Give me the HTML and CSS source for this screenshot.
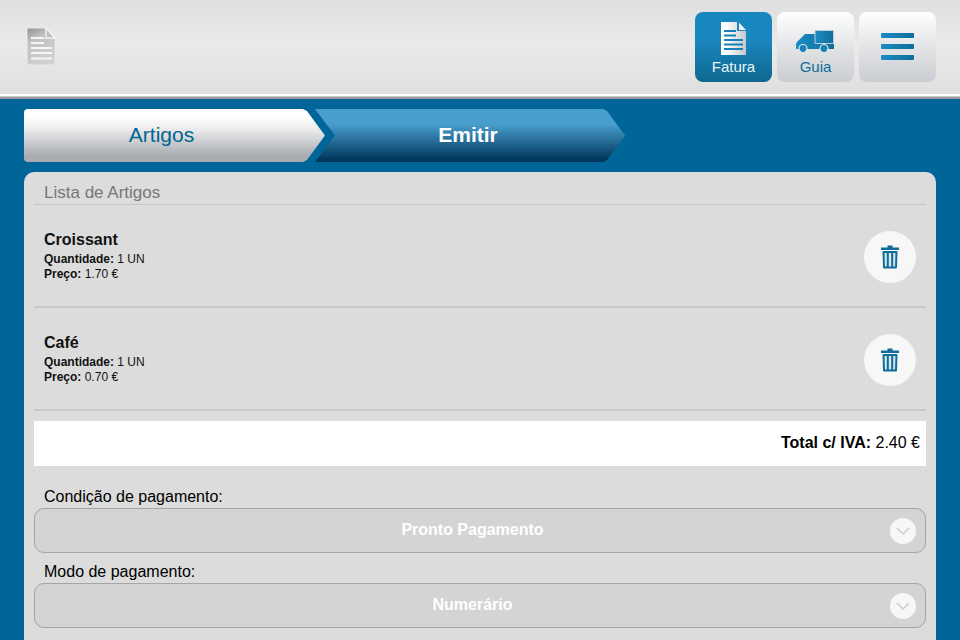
FILE: index.html
```
<!DOCTYPE html>
<html lang="pt">
<head>
	<meta charset="UTF-8">
	<meta name="viewport" content="width=device-width, initial-scale=1">
	<title>Emitir Fatura</title>
	<link rel="stylesheet" href="styles.css">
</head>
<body>
<header class="topbar">
	<svg class="doc-icon" width="36" height="44" viewBox="0 0 36 44" aria-hidden="true">
		<defs>
			<linearGradient id="docGrey" x1="0" y1="0" x2="0.4" y2="1">
				<stop offset="0" stop-color="#8c8f91"/>
				<stop offset="0.35" stop-color="#bfc1c2"/>
				<stop offset="1" stop-color="#cfd1d1"/>
			</linearGradient>
		</defs>
		<path d="M4 3h18l9 10v25q0 2-2 2H5q-2 0-2-2V4q0-1 1-1z" fill="url(#docGrey)" stroke="#e9e9e9" stroke-width="1"/>
		<path d="M22 3v10h9z" fill="#bcbec0" stroke="#f4f4f4" stroke-width="1.4"/>
		<path d="M7 13h13M7 18h13M7 23h21M7 28h21M7 33.500h21" stroke="#f6f6f6" stroke-width="2.200"/>
	</svg>
	<nav class="menu">
		<button type="button" class="menu-btn active">
			<svg width="26" height="34" viewBox="0 0 26 34" aria-hidden="true">
				<defs>
					<linearGradient id="docWhite">
						<stop offset="0.2" stop-color="#fff"/>
						<stop offset="1" stop-color="#c4c8cd"/>
					</linearGradient>
				</defs>
				<path d="M0 0h16v9h9v24H0z" fill="url(#docWhite)"/>
				<path d="M18 0.500v7.500h7z" fill="#f2f2f2"/>
				<path d="M3 9h12M3 13.500h12M3 18h19M3 22.500h19M3 27h19" stroke="#1781b8" stroke-width="2"/>
			</svg>
			<span>Fatura</span>
		</button>
		<button type="button" class="menu-btn">
			<svg width="39" height="34" viewBox="0 0 39 34" aria-hidden="true">
				<defs>
					<linearGradient id="blue">
						<stop offset="0" stop-color="#1a8cc6"/>
						<stop offset="1" stop-color="#0f6d97"/>
					</linearGradient>
				</defs>
				<path d="M0 27v-5l1-2 8-8h10v10h19v5z" fill="url(#blue)"/>
				<path d="M19 8.500h18.500v13H19z" fill="url(#blue)" stroke="#b9cfdb"/>
				<circle cx="7" cy="26.500" r="4" fill="#1781b8" stroke="#e3e6e8" stroke-width="1.200"/>
				<circle cx="28" cy="26.500" r="4" fill="#1781b8" stroke="#e3e6e8" stroke-width="1.200"/>
			</svg>
			<span>Guia</span>
		</button>
		<button type="button" class="menu-btn menu-toggle" aria-label="Menu">
			<svg width="33" height="28" viewBox="0 0 33 28" aria-hidden="true">
				<g fill="url(#blue)">
					<rect y="0" width="33" height="5" rx="1"/>
					<rect y="11" width="33" height="5" rx="1"/>
					<rect y="22" width="33" height="5" rx="1"/>
				</g>
			</svg>
		</button>
	</nav>
</header>
<main class="content">
	<nav class="steps">
		<button type="button" class="step step-first">Artigos</button>
		<button type="button" class="step step-next">Emitir</button>
	</nav>
	<section class="panel">
		<h1 class="panel-title">Lista de Artigos</h1>
		<ul class="items">
			<li class="item">
				<div class="info">
					<h2>Croissant</h2>
					<p><b>Quantidade:</b> 1 UN</p>
					<p><b>Preço:</b> 1.70 €</p>
				</div>
				<button type="button" class="delete" aria-label="Apagar Croissant">
					<svg width="18" height="24" viewBox="0 0 18 24" aria-hidden="true">
						<path d="M6.500 0.500h5v2H18v2.500H0V2.500h6.500z" fill="#0f6d97"/>
						<path d="M2.500 7h13l-0.500 15.500H3z" fill="#d5e6ee" stroke="#0f6d97" stroke-width="2" stroke-linejoin="round"/>
						<path d="M6.800 7v15M11.200 7v15" stroke="#0f6d97" stroke-width="2"/>
					</svg>
				</button>
			</li>
			<li class="item">
				<div class="info">
					<h2>Café</h2>
					<p><b>Quantidade:</b> 1 UN</p>
					<p><b>Preço:</b> 0.70 €</p>
				</div>
				<button type="button" class="delete" aria-label="Apagar Café">
					<svg width="18" height="24" viewBox="0 0 18 24" aria-hidden="true">
						<path d="M6.500 0.500h5v2H18v2.500H0V2.500h6.500z" fill="#0f6d97"/>
						<path d="M2.500 7h13l-0.500 15.500H3z" fill="#d5e6ee" stroke="#0f6d97" stroke-width="2" stroke-linejoin="round"/>
						<path d="M6.800 7v15M11.200 7v15" stroke="#0f6d97" stroke-width="2"/>
					</svg>
				</button>
			</li>
		</ul>
		<p class="total"><b>Total c/ IVA:</b> 2.40 €</p>
		<form class="payment">
			<label for="condicao">Condição de pagamento:</label>
			<div class="select">
				<select id="condicao">
					<option>Pronto Pagamento</option>
				</select>
				<svg class="arrow" width="26" height="26" viewBox="0 0 26 26" aria-hidden="true">
					<circle cx="13" cy="13" r="13" fill="#f7f7f7"/>
					<path d="M7 10l6 6 6-6" fill="none" stroke="#ccc" stroke-width="1.500"/>
				</svg>
			</div>
			<label for="modo">Modo de pagamento:</label>
			<div class="select">
				<select id="modo">
					<option>Numerário</option>
				</select>
				<svg class="arrow" width="26" height="26" viewBox="0 0 26 26" aria-hidden="true">
					<circle cx="13" cy="13" r="13" fill="#f7f7f7"/>
					<path d="M7 10l6 6 6-6" fill="none" stroke="#ccc" stroke-width="1.500"/>
				</svg>
			</div>
		</form>
	</section>
</main>
</body>
</html>
```
FILE: styles.css
```
*{
	box-sizing: border-box;
}
body{
	margin: 0;
	min-height: 100vh;
	display: flex;
	flex-direction: column;
	background: #006699;
	color: #111;
	font-family: "Liberation Sans", Arial, sans-serif;
	font-size: 16px;
}
h1, h2, p, ul{
	margin: 0;
	padding: 0;
}
button, select{
	font-family: inherit;
	border: none;
	cursor: pointer;
}

/* top bar */
.topbar{
	display: flex;
	justify-content: space-between;
	align-items: center;
	padding: 12px 24px;
	background: linear-gradient(#dfdfdf, #eaeaea 50%, #dfdfdf);
	border-bottom: 2px solid #fff;
	box-shadow: 0 1px 0 #c9c9c9, 0 3px 0 #999;
	margin-bottom: 3px;
}
.doc-icon{
	display: block;
}
.menu{
	display: flex;
	gap: 5px;
}
.menu-btn{
	display: flex;
	flex-direction: column;
	align-items: center;
	justify-content: center;
	gap: 2px;
	width: 77px;
	height: 70px;
	padding: 4px 0 0;
	border-radius: 8px;
	background: linear-gradient(#fff, #e3e4e6 50%, #cacdd2);
	color: #0f6d97;
	font-size: 15px;
	line-height: 18px;
}
.menu-btn.active{
	background: linear-gradient(#1987bf 40%, #0f678f);
	color: #e8f4fa;
}
.menu-toggle{
	padding: 0;
}

/* steps */
.content{
	flex: 1;
	display: flex;
	flex-direction: column;
	padding: 10px 24px 0;
}
.steps{
	display: flex;
	margin-bottom: 10px;
}
.step{
	flex: 0 0 33%;
	height: 53px;
	padding: 0 26px 2px 0;
	font-size: 21px;
}
.step-first{
	border-radius: 4px 0 0 4px;
	background: linear-gradient(#fff 15%, #e9e9eb 40%, #a9acb1 88%);
	color: #006690;
	clip-path: polygon(0 0, calc(100% - 22px) 0, calc(100% - 18px) 2px, 100% 50%, calc(100% - 18px) 51px, calc(100% - 22px) 100%, 0 100%);
}
.step-next{
	flex-basis: 34%;
	margin-left: -10px;
	padding: 0 4px 2px 0;
	background: linear-gradient(#489fce 28%, #02375c 95%);
	color: #fff;
	font-weight: bold;
	clip-path: polygon(0 0, calc(100% - 22px) 0, calc(100% - 18px) 2px, 100% 50%, calc(100% - 18px) 51px, calc(100% - 22px) 100%, 0 100%, 20px 50%);
}

/* panel */
.panel{
	flex: 1;
	padding: 10px 10px 12px;
	border-radius: 10px 10px 0 0;
	background: #dcdcdc;
}
.panel-title{
	padding: 1px 10px;
	border-bottom: 1px solid #c6c6c6;
	color: #777;
	font-size: 17px;
	font-weight: normal;
	line-height: 20px;
}
.items{
	list-style: none;
}
.item{
	display: flex;
	justify-content: space-between;
	align-items: center;
	height: 103px;
	padding: 2px 10px 0;
	border-bottom: 2px solid #c9c9c9;
}
.info{
	padding-bottom: 3px;
}
.item h2{
	margin-bottom: 1px;
	font-size: 16px;
	line-height: 22px;
}
.item p{
	font-size: 12px;
	line-height: 15px;
}
.delete{
	display: flex;
	align-items: center;
	justify-content: center;
	width: 52px;
	height: 52px;
	padding: 0;
	border-radius: 50%;
	background: #f7f7f7;
}
.total{
	margin: 10px 0 20px;
	padding: 0 6px 2px;
	background: #fff;
	color: #000;
	line-height: 43px;
	text-align: right;
}

/* payment */
.payment label{
	display: block;
	padding: 1px 10px;
	color: #000;
	line-height: 20px;
}
.select{
	position: relative;
	margin-bottom: 8px;
}
.select select{
	display: block;
	width: 100%;
	height: 45px;
	padding: 0 25px 2px 10px;
	border: 1px solid #a5a5a5;
	border-radius: 10px;
	background: #d4d4d4;
	color: #fff;
	font-size: 16px;
	font-weight: bold;
	text-align: center;
	text-align-last: center;
	-webkit-appearance: none;
	appearance: none;
}
.arrow{
	position: absolute;
	top: 10px;
	right: 10px;
	pointer-events: none;
}
```
